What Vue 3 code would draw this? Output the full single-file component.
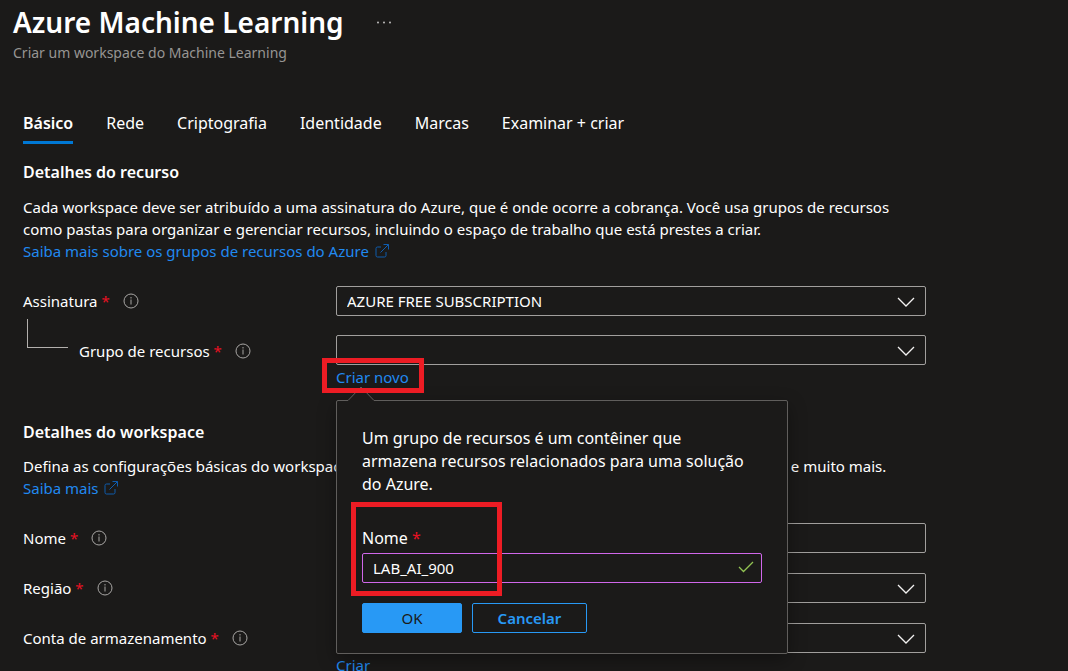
<script setup>
import { ref } from 'vue'

const tabs = ['Básico', 'Rede', 'Criptografia', 'Identidade', 'Marcas', 'Examinar + criar']
const active = ref('Básico')
const groupName = ref('LAB_AI_900')
const workspaceName = ref('')

const workspaceFields = [
  { id: 'name', label: 'Nome', type: 'text' },
  { id: 'region', label: 'Região', type: 'select' },
  { id: 'storage', label: 'Conta de armazenamento', type: 'select' },
]
</script>

<template>
  <main class="page">
    <header class="header">
      <div class="title-row">
        <h1>Azure Machine Learning</h1>
        <button class="more" type="button" aria-label="Mais">
          <svg width="14" height="4" viewBox="0 0 14 4"><g fill="#d0cfce"><circle cx="1" cy="2.500" r=".9" /><circle cx="7" cy="2.500" r=".9" /><circle cx="13" cy="2.500" r=".9" /></g></svg>
        </button>
      </div>
      <p class="subtitle">Criar um workspace do Machine Learning</p>
    </header>

    <div class="content">
      <nav class="tabs" role="tablist">
        <button
          v-for="tab in tabs"
          :key="tab"
          type="button"
          role="tab"
          class="tab"
          :class="{ active: tab === active }"
          :aria-selected="tab === active"
          @click="active = tab"
        >{{ tab }}</button>
      </nav>

      <section>
        <h2>Detalhes do recurso</h2>
        <p class="text">
          Cada workspace deve ser atribuído a uma assinatura do Azure, que é onde ocorre a cobrança. Você usa grupos de recursos
          como pastas para organizar e gerenciar recursos, incluindo o espaço de trabalho que está prestes a criar.
        </p>
        <a class="link" href="#">Saiba mais sobre os grupos de recursos do Azure
          <svg class="ext" width="14" height="14" viewBox="0 0 14 14"><path d="M6 3H2.5Q1 3 1 4.500V11.500Q1 13 2.500 13H9.500Q11 13 11 11.500V8M8.500 .5H13.500V5.500M13.500 .5L5.500 8.500" /></svg>
        </a>

        <div class="row first">
          <div class="label">
            <label for="subscription">Assinatura <span class="req">*</span></label>
            <svg class="info" width="16" height="16" viewBox="0 0 16 16"><circle cx="8" cy="8" r="7" /><path d="M8 6.500V11.500M8 4V5.500" /></svg>
          </div>
          <div class="control">
            <select id="subscription"><option>AZURE FREE SUBSCRIPTION</option></select>
            <svg class="chevron" width="18" height="10" viewBox="0 0 18 10"><path d="M1 1L9 9L17 1" /></svg>
          </div>
        </div>

        <div class="row group">
          <div class="label nested">
            <span class="branch"></span>
            <label for="group">Grupo de recursos <span class="req">*</span></label>
            <svg class="info" width="16" height="16" viewBox="0 0 16 16"><circle cx="8" cy="8" r="7" /><path d="M8 6.500V11.500M8 4V5.500" /></svg>
          </div>
          <div class="field">
            <div class="control">
              <select id="group"><option></option></select>
              <svg class="chevron" width="18" height="10" viewBox="0 0 18 10"><path d="M1 1L9 9L17 1" /></svg>
            </div>
            <a class="link create marked" href="#">Criar novo</a>

            <form class="callout" @submit.prevent>
              <svg class="beak" width="28" height="15" viewBox="0 0 28 15"><path class="beak-fill" d="M1 15V14L14 1L27 14V15Z" /><path class="beak-line" d="M1 14.500L14 1L27 14.500" /></svg>
              <p>Um grupo de recursos é um contêiner que armazena recursos relacionados para uma solução do Azure.</p>
              <div class="name-field">
                <label for="group-name">Nome <span class="req">*</span></label>
                <div class="name-input">
                  <input id="group-name" v-model="groupName" type="text" />
                  <svg class="check" width="16" height="12" viewBox="0 0 16 12"><path d="M1 6L5.500 10.500L15 1" /></svg>
                </div>
              </div>
              <div class="actions">
                <button class="ok" type="submit">OK</button>
                <button class="cancel" type="button">Cancelar</button>
              </div>
            </form>
          </div>
        </div>
      </section>

      <section class="workspace">
        <h2>Detalhes do workspace</h2>
        <p class="text">Defina as configurações básicas do workspace, como a conexão de armazenamento, autenticação, contêiner e muito mais.</p>
        <a class="link" href="#">Saiba mais
          <svg class="ext" width="14" height="14" viewBox="0 0 14 14"><path d="M6 3H2.5Q1 3 1 4.500V11.500Q1 13 2.500 13H9.500Q11 13 11 11.500V8M8.500 .5H13.500V5.500M13.500 .5L5.500 8.500" /></svg>
        </a>

        <div class="rows">
          <div v-for="f in workspaceFields" :key="f.id" class="row">
            <div class="label">
              <label :for="f.id">{{ f.label }} <span class="req">*</span></label>
              <svg class="info" width="16" height="16" viewBox="0 0 16 16"><circle cx="8" cy="8" r="7" /><path d="M8 6.500V11.500M8 4V5.500" /></svg>
            </div>
            <div class="control">
              <input v-if="f.type === 'text'" :id="f.id" v-model="workspaceName" type="text" />
              <template v-else>
                <select :id="f.id"><option></option></select>
                <svg class="chevron" width="18" height="10" viewBox="0 0 18 10"><path d="M1 1L9 9L17 1" /></svg>
              </template>
            </div>
          </div>
        </div>
        <div class="row last"><a class="link create" href="#">Criar</a></div>
      </section>
    </div>
  </main>
</template>

<style>
html,
body {
  margin: 0;
  background: #1b1a19;
}
</style>

<style scoped>
.page {
  box-sizing: border-box;
  height: 100vh;
  overflow: hidden;
  padding-top: 3px;
  background: #1b1a19;
  color: #fff;
  font: 15px/22px "Noto Sans", "Open Sans", sans-serif;
}
.page *,
.page *::after { box-sizing: border-box; }
button, input, select { font: inherit; color: inherit; }
h1, h2, p { margin: 0; }
.header { padding-left: 13px; }
.title-row { display: flex; align-items: center; gap: 33px; }
h1 { font-size: 28px; line-height: 38px; font-weight: 600; }
.more { display: flex; padding: 0; border: 0; background: none; }
.subtitle { margin-top: 2px; font-size: 14px; line-height: 20px; color: #979593; }
.content { padding: 0 23px; }
.tabs { display: flex; gap: 33px; margin-top: 48px; }
.tab {
  padding: 0 0 6px;
  border: 0;
  border-bottom: 3px solid transparent;
  background: none;
  font-size: 16px;
  line-height: 24px;
}
.tab.active { font-weight: 600; border-bottom-color: #0078d4; }
h2 { margin-top: 16px; font-size: 16px; line-height: 24px; font-weight: 600; }
.text { max-width: 902px; margin-top: 12px; }
.link { display: table; color: #2189f0; text-decoration: none; }
.ext { margin-left: 2px; vertical-align: -1px; fill: none; stroke: #0f5cae; }
.row {
  display: grid;
  grid-template-columns: 313px minmax(0, 590px);
  align-items: start;
}
.first { margin-top: 24px; }
.group { margin-top: 19px; }
.label { display: flex; align-items: center; height: 30px; gap: 13px; }
.req { color: #e81123; }
.info { fill: none; stroke: #a8a6a4; }
.nested { position: relative; padding-left: 56px; height: 32px; }
.branch {
  position: absolute;
  left: 4px;
  top: -16px;
  width: 41px;
  height: 29px;
  border: solid #b3b0ad;
  border-width: 0 0 1px 1px;
}
.field { position: relative; }
.control { position: relative; height: 30px; }
.control select,
.control input {
  display: block;
  appearance: none;
  width: 100%;
  height: 30px;
  padding: 0 40px 0 10px;
  border: 1px solid #a19f9d;
  border-radius: 2px;
  background: #1b1a19;
  outline: none;
}
.chevron {
  position: absolute;
  right: 11px;
  top: 11px;
  fill: none;
  stroke: #f3f2f1;
  stroke-width: 1.3;
  pointer-events: none;
}
.create { line-height: 24px; }
.marked { position: relative; z-index: 2; }
.marked::after {
  content: "";
  position: absolute;
  inset: -7px -15px -4px -14px;
  border: 5px solid #ed1c24;
}
.callout {
  position: absolute;
  z-index: 1;
  left: 0;
  top: 65px;
  width: 452px;
  padding: 26px 25px 20px;
  border: 1px solid #605e5c;
  border-radius: 2px;
  background: #1b1a19;
  box-shadow: 0 6px 18px rgba(0, 0, 0, 0.35);
  font-size: 16px;
  line-height: 23px;
}
.callout p { max-width: 391px; }
.beak { position: absolute; left: 10px; top: -15px; }
.beak-fill { fill: #1b1a19; }
.beak-line { fill: none; stroke: #605e5c; }
.name-field { position: relative; margin-top: 30px; }
.name-field::after {
  content: "";
  position: absolute;
  top: -24px;
  left: -11px;
  width: 151px;
  height: 94px;
  border: 5px solid #ed1c24;
  pointer-events: none;
}
.name-field label { display: block; line-height: 24px; }
.name-input { position: relative; margin-top: 3px; }
.name-input input {
  display: block;
  width: 400px;
  height: 30px;
  padding: 0 36px 0 10px;
  border: 1px solid #d067ea;
  border-radius: 2px;
  background: #1b1a19;
  font-size: 15px;
  outline: none;
}
.check { position: absolute; right: 8px; top: 8px; fill: none; stroke: #92c353; stroke-width: 1.3; }
.actions { display: flex; gap: 10px; margin-top: 20px; }
.actions button { height: 30px; padding: 0; border: 1px solid #2899f5; border-radius: 2px; font-size: 15px; line-height: 20px; }
.ok { width: 100px; background: #2899f5; color: #1b1a19; }
.actions .cancel { width: 115px; background: #1b1a19; color: #2899f5; font-weight: 600; }
.workspace { margin-top: 31px; }
.workspace h2 { margin-top: 0; }
.workspace .text { margin-top: 11px; }
.rows { display: grid; gap: 20px; margin-top: 24px; }
.last .create { grid-column: 2; }
</style>
